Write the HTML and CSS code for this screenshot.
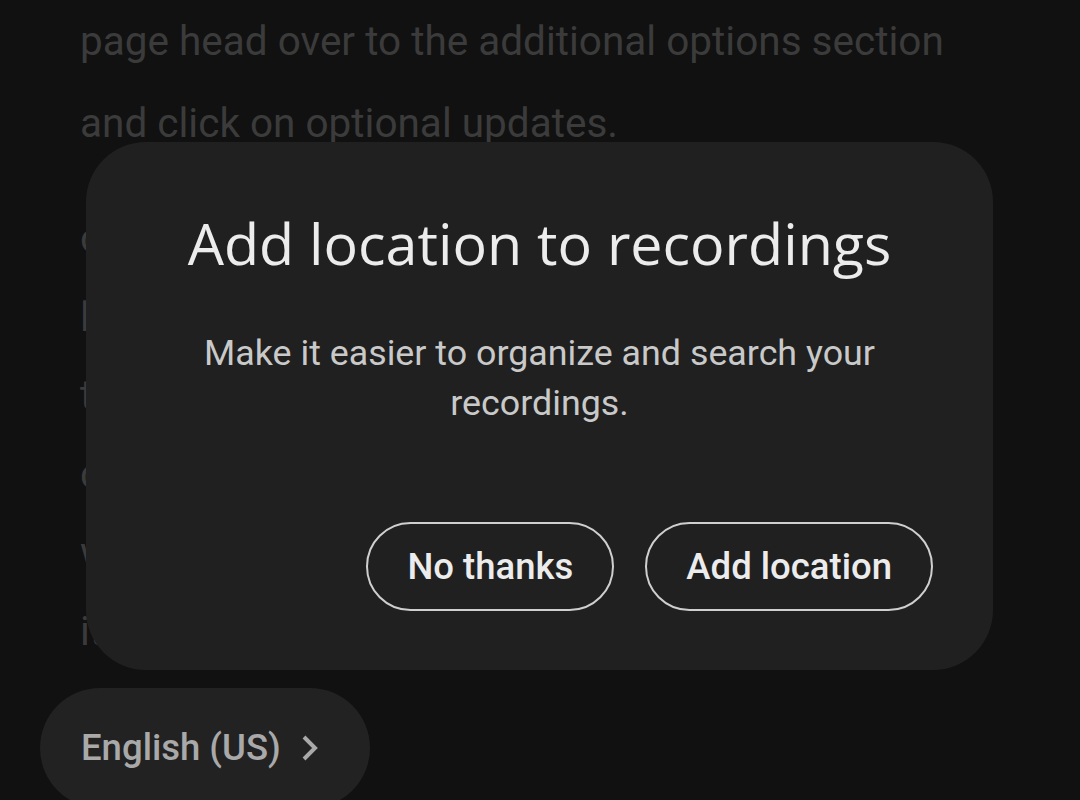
FILE: index.html
```
<!DOCTYPE html>
<html>
<head>
<meta charset="utf-8">
<link rel="stylesheet" href="styles.css">
</head>
<body>
<main class="page">
  <article class="article">
    <p class="para first">page head over to the additional options section and click on optional updates.</p>
    <p class="para">once you are in the optional updates list<br>look for the driver updates that you need<br>then select the ones you want to install,<br>click download and install to continue,<br>wait for the installation to complete and<br>it might take a few minutes to finish.</p>
  </article>
  <div class="lang-row">
    <button class="lang-chip">English (US)
      <svg class="chev" width="20" height="30" viewBox="0 0 20 30"><path d="M4 4 L15 15 L4 26" fill="none" stroke="currentColor" stroke-width="4" stroke-linecap="butt" stroke-linejoin="miter"/></svg>
    </button>
  </div>
  <section class="dialog" role="dialog">
    <h1 class="dialog-title">Add location to recordings</h1>
    <p class="dialog-body">Make it easier to organize and search your recordings.</p>
    <div class="dialog-actions">
      <button class="btn">No thanks</button>
      <button class="btn">Add location</button>
    </div>
  </section>
</main>
</body>
</html>
```
FILE: styles.css
```
html, body {
  margin: 0;
  padding: 0;
  background: #111111;
  height: 100%;
  overflow: hidden;
}
.page {
  position: relative;
  width: 1080px;
  height: 800px;
  font-family: Roboto, "Noto Sans", sans-serif;
}
.article {
  padding: 0 80px;
}
.para {
  margin: 0;
  color: #3b3b3b;
  font-size: 40.5px;
  line-height: 78.5px;
  width: 900px;
}
.para.first {
  line-height: 82px;
  margin-bottom: 35px;
}
.lang-row {
  padding-left: 40px;
  margin-top: 18px;
}
.lang-chip {
  display: flex;
  align-items: flex-start;
  gap: 19px;
  height: 120px;
  padding: 38px 50px 0 41px;
  border: none;
  border-radius: 60px;
  background: #222222;
  color: #a9a9a9;
  font-family: Roboto, "Noto Sans", sans-serif;
  font-size: 36.5px;
  font-weight: 500;
  box-sizing: border-box;
}
.chev {
  margin-top: 7px;
}
.dialog {
  position: absolute;
  left: 86px;
  top: 142px;
  width: 907px;
  height: 528px;
  box-sizing: border-box;
  background: #202020;
  border-radius: 60px;
  display: flex;
  flex-direction: column;
  align-items: center;
  padding: 66px 60px 59px;
}
.dialog-title {
  margin: 0;
  color: #ececec;
  font-family: "Open Sans", sans-serif;
  font-weight: 400;
  font-size: 57.4px;
  line-height: 70px;
  text-align: center;
}
.dialog-body {
  margin: 50px 0 0;
  color: #c9c9c9;
  font-family: Roboto, sans-serif;
  font-size: 35.8px;
  line-height: 50px;
  text-align: center;
  width: 760px;
}
.dialog-actions {
  margin-top: auto;
  align-self: flex-end;
  display: flex;
  gap: 31px;
}
.btn {
  height: 89px;
  padding: 0 39px;
  border: 2px solid #cfcfcf;
  border-radius: 45px;
  background: transparent;
  color: #ececec;
  font-family: Roboto, sans-serif;
  font-weight: 500;
  font-size: 36.5px;
}
```
